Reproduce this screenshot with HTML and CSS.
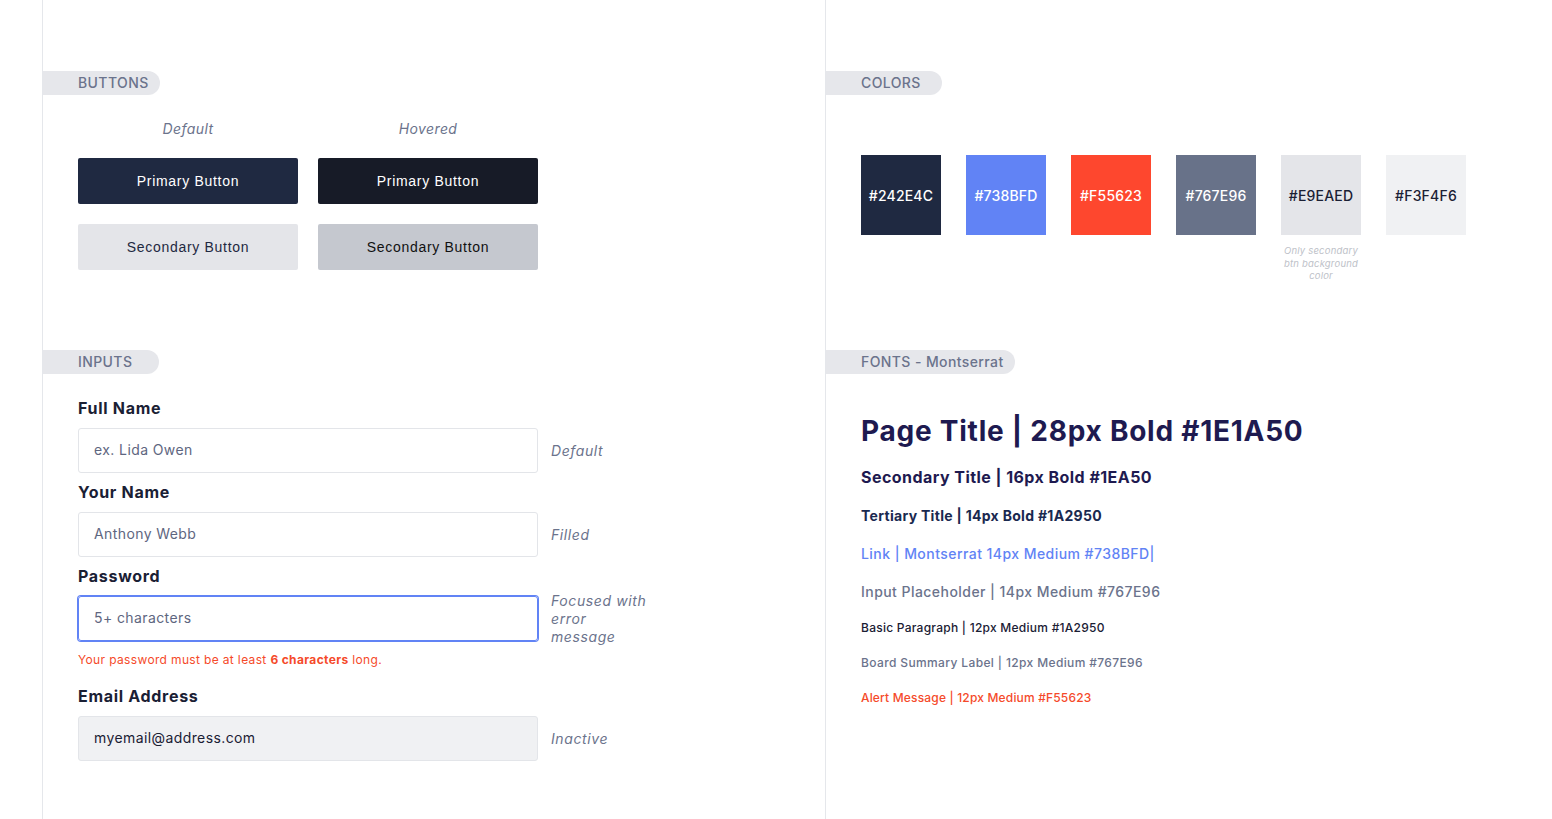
FILE: index.html
```html
<!DOCTYPE html>
<html lang="en">
<head>
    <meta charset="UTF-8">
    <meta name="viewport" content="width=device-width, initial-scale=1.0">
    <title>UI Kit</title>
    <link rel="stylesheet" href="styles.css">
</head>
<body>
    <div class="board">
        <div class="column column-left">
            <section class="section section-top">
                <div class="section-tag">Buttons</div>
                <div class="button-grid">
                    <div class="state-label">Default</div>
                    <div class="state-label">Hovered</div>
                    <button class="btn btn-primary">Primary Button</button>
                    <button class="btn btn-primary hovered">Primary Button</button>
                    <button class="btn btn-secondary">Secondary Button</button>
                    <button class="btn btn-secondary hovered">Secondary Button</button>
                </div>
            </section>

            <section class="section">
                <div class="section-tag">Inputs</div>
                <div class="fields">
                    <div class="field">
                        <label class="field-label">Full Name</label>
                        <div class="field-row">
                            <div class="input placeholder">ex. Lida Owen</div>
                            <div class="field-note">Default</div>
                        </div>
                    </div>
                    <div class="field">
                        <label class="field-label">Your Name</label>
                        <div class="field-row">
                            <div class="input filled">Anthony Webb</div>
                            <div class="field-note">Filled</div>
                        </div>
                    </div>
                    <div class="field">
                        <label class="field-label">Password</label>
                        <div class="field-row">
                            <div class="input focused placeholder">5+ characters</div>
                            <div class="field-note tall">Focused with<br>error<br>message</div>
                        </div>
                        <div class="field-error">Your password must be at least <strong>6 characters</strong> long.</div>
                    </div>
                    <div class="field field-email">
                        <label class="field-label">Email Address</label>
                        <div class="field-row">
                            <div class="input inactive">myemail@address.com</div>
                            <div class="field-note">Inactive</div>
                        </div>
                    </div>
                </div>
            </section>
        </div>

        <div class="column column-right">
            <section class="section section-top">
                <div class="section-tag">Colors</div>
                <div class="swatches">
                    <div class="swatch">
                        <div class="swatch-box light-text" style="background-color: #1F2941;">#242E4C</div>
                    </div>
                    <div class="swatch">
                        <div class="swatch-box light-text" style="background-color: #6183F5;">#738BFD</div>
                    </div>
                    <div class="swatch">
                        <div class="swatch-box light-text" style="background-color: #FE472E;">#F55623</div>
                    </div>
                    <div class="swatch">
                        <div class="swatch-box light-text" style="background-color: #687289;">#767E96</div>
                    </div>
                    <div class="swatch">
                        <div class="swatch-box" style="background-color: #E4E5E9;">#E9EAED</div>
                        <div class="swatch-note">Only secondary btn background color</div>
                    </div>
                    <div class="swatch">
                        <div class="swatch-box" style="background-color: #F0F1F3;">#F3F4F6</div>
                    </div>
                </div>
            </section>

            <section class="section">
                <div class="section-tag">Fonts - <span class="tag-normal">Montserrat</span></div>
                <div class="type-list">
                    <div class="type-page-title">Page Title | 28px Bold #1E1A50</div>
                    <div class="type-secondary">Secondary Title | 16px Bold #1EA50</div>
                    <div class="type-tertiary">Tertiary Title | 14px Bold #1A2950</div>
                    <div class="type-link">Link | Montserrat 14px Medium #738BFD|</div>
                    <div class="type-placeholder">Input Placeholder | 14px Medium #767E96</div>
                    <div class="type-paragraph">Basic Paragraph | 12px Medium #1A2950</div>
                    <div class="type-summary">Board Summary Label | 12px Medium #767E96</div>
                    <div class="type-alert">Alert Message | 12px Medium #F55623</div>
                </div>
            </section>
        </div>
    </div>
</body>
</html>
```

FILE: styles.css
```css
body {
    margin: 0;
    padding: 0;
    background-color: #fff;
    font-family: 'Inter', 'Noto Sans', sans-serif;
    letter-spacing: 0.4px;
    color: #1A2950;
}
.board {
    display: flex;
    min-height: 100vh;
    padding-left: 42px;
}
.column {
    border-left: 1px solid #E5E7EB;
    padding-top: 71px;
    box-sizing: border-box;
}
.column-left {
    width: 783px;
}
.column-right {
    flex: 1;
}
.section-top {
    height: 279px;
}
.section-tag {
    display: inline-block;
    min-width: 116px;
    box-sizing: border-box;
    height: 24px;
    line-height: 24px;
    padding: 0 11px 0 35px;
    background-color: #E6E7EB;
    border-radius: 0 12px 12px 0;
    font-size: 14px;
    font-weight: 500;
    color: #6B738C;
    text-transform: uppercase;
}
.tag-normal {
    text-transform: none;
}

/* buttons */
.button-grid {
    display: grid;
    grid-template-columns: 220px 220px;
    column-gap: 20px;
    row-gap: 20px;
    margin: 26px 0 0 35px;
}
.state-label {
    text-align: center;
    font-size: 14px;
    line-height: 16px;
    font-style: italic;
    color: #6B738C;
    margin-bottom: 1px;
}
.btn {
    height: 46px;
    border: none;
    border-radius: 2px;
    font-family: 'Liberation Sans', Arial, sans-serif;
    font-size: 14px;
    letter-spacing: 0.7px;
    cursor: pointer;
}
.btn-primary {
    background-color: #1F2941;
    color: #fff;
}
.btn-primary.hovered {
    background-color: #171B27;
}
.btn-secondary {
    background-color: #E4E5E9;
    color: #1F2941;
}
.btn-secondary.hovered {
    background-color: #C5C8CF;
    color: #111;
}

/* inputs */
.fields {
    margin: 24px 0 0 35px;
}
.field {
    margin-bottom: 9px;
}
.field-label {
    display: block;
    font-size: 16px;
    line-height: 20px;
    font-weight: 700;
    letter-spacing: 0.7px;
    color: #1A2034;
    margin-bottom: 10px;
}
.field-row {
    display: flex;
    align-items: center;
    gap: 13px;
}
.input {
    width: 460px;
    height: 45px;
    box-sizing: border-box;
    border: 1px solid #E3E5E9;
    border-radius: 3px;
    padding: 0 0 2px 15px;
    display: flex;
    align-items: center;
    font-size: 14px;
    color: #5E6680;
}
.input.focused {
    border-color: #6183F5;
    box-shadow: 0 0 0 1px #6183F5;
}
.input.inactive {
    background-color: #F0F1F3;
    color: #1A2034;
}
.field-note {
    font-size: 14px;
    line-height: 18px;
    font-style: italic;
    color: #6B738C;
    letter-spacing: 0.6px;
}
.field-note.tall {
    margin: -5px 0;
}
.field-error {
    margin-top: 11px;
    font-size: 12px;
    line-height: 16px;
    color: #F54A2A;
    letter-spacing: 0.35px;
}
.field-error strong {
    font-weight: 700;
}
.field-email {
    margin-top: 18px;
}

/* colors */
.swatches {
    display: flex;
    gap: 25px;
    margin: 60px 0 0 35px;
}
.swatch {
    width: 80px;
}
.swatch-box {
    height: 80px;
    display: flex;
    align-items: center;
    justify-content: center;
    font-size: 14px;
    font-weight: 500;
    letter-spacing: 0.2px;
    color: #1A2034;
}
.swatch-box.light-text {
    color: #fff;
}
.swatch-note {
    margin-top: 10px;
    font-size: 9.5px;
    line-height: 12.5px;
    font-style: italic;
    text-align: center;
    letter-spacing: 0.2px;
    color: #BDC1C8;
}

/* fonts */
.type-list {
    margin: 40px 0 0 35px;
}
.type-page-title {
    font-size: 28px;
    line-height: 34px;
    font-weight: 700;
    letter-spacing: 0.75px;
    color: #1E1A50;
}
.type-secondary {
    margin-top: 19px;
    font-size: 16px;
    line-height: 20px;
    font-weight: 700;
    letter-spacing: 0.45px;
    color: #1E1A50;
}
.type-tertiary {
    margin-top: 20px;
    font-size: 14px;
    line-height: 18px;
    font-weight: 700;
    letter-spacing: 0.3px;
    color: #1A2950;
}
.type-link {
    margin-top: 20px;
    font-size: 14px;
    line-height: 18px;
    font-weight: 500;
    letter-spacing: 0.45px;
    color: #6183F5;
}
.type-placeholder {
    margin-top: 20px;
    font-size: 14px;
    line-height: 18px;
    font-weight: 500;
    letter-spacing: 0.45px;
    color: #6B738C;
}
.type-paragraph,
.type-summary,
.type-alert {
    margin-top: 19px;
    font-size: 12px;
    line-height: 16px;
    font-weight: 500;
}
.type-paragraph {
    color: #1A2034;
    letter-spacing: 0.25px;
}
.type-summary {
    color: #6B738C;
    letter-spacing: 0.37px;
}
.type-alert {
    color: #F54A2A;
    letter-spacing: 0.17px;
}
```
